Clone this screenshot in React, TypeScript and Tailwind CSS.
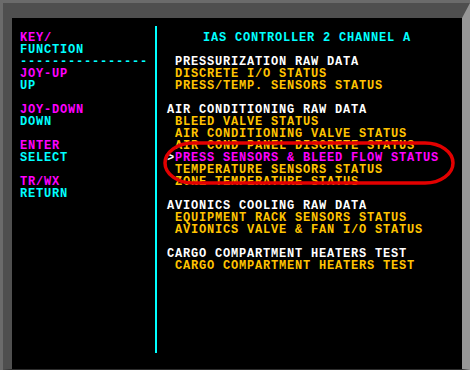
import React from "react";

type Line = { text: string; color: string };

const MAG = "text-[#ff00ff]";
const CYAN = "text-[#00ffff]";
const YEL = "text-[#ffc400]";
const WHITE = "text-white";

const leftLines: Line[] = [
  { text: "KEY/", color: MAG },
  { text: "FUNCTION", color: CYAN },
  { text: "----------------", color: CYAN },
  { text: "JOY-UP", color: MAG },
  { text: "UP", color: CYAN },
  { text: "", color: CYAN },
  { text: "JOY-DOWN", color: MAG },
  { text: "DOWN", color: CYAN },
  { text: "", color: CYAN },
  { text: "ENTER", color: MAG },
  { text: "SELECT", color: CYAN },
  { text: "", color: CYAN },
  { text: "TR/WX", color: MAG },
  { text: "RETURN", color: CYAN },
];

const rightLines: Line[] = [
  { text: "", color: WHITE },
  { text: " PRESSURIZATION RAW DATA", color: WHITE },
  { text: " DISCRETE I/O STATUS", color: YEL },
  { text: " PRESS/TEMP. SENSORS STATUS", color: YEL },
  { text: "", color: WHITE },
  { text: "AIR CONDITIONING RAW DATA", color: WHITE },
  { text: " BLEED VALVE STATUS", color: YEL },
  { text: " AIR CONDITIONING VALVE STATUS", color: YEL },
  { text: " AIR COND PANEL DISCRETE STATUS", color: YEL },
  { text: ">PRESS SENSORS & BLEED FLOW STATUS", color: MAG },
  { text: " TEMPERATURE SENSORS STATUS", color: YEL },
  { text: " ZONE TEMPERATURE STATUS", color: YEL },
  { text: "", color: WHITE },
  { text: "AVIONICS COOLING RAW DATA", color: WHITE },
  { text: " EQUIPMENT RACK SENSORS STATUS", color: YEL },
  { text: " AVIONICS VALVE & FAN I/O STATUS", color: YEL },
  { text: "", color: WHITE },
  { text: "CARGO COMPARTMENT HEATERS TEST", color: WHITE },
  { text: " CARGO COMPARTMENT HEATERS TEST", color: YEL },
];

function Row({ line }: { line: Line }) {
  if (line.text.startsWith(">")) {
    return (
      <div className="h-[12px] whitespace-pre">
        <span className="text-white">&gt;</span>
        <span className={line.color}>{line.text.slice(1)}</span>
      </div>
    );
  }
  return <div className={`h-[12px] whitespace-pre ${line.color}`}>{line.text || " "}</div>;
}

export default function App() {
  return (
    <div className="w-[470px] h-[370px] border-t-[3px] border-l-[3px] border-[#6b6b6b] bg-[#4f4f4f]">
      <div className="w-[467px] h-[367px] border-t-[15px] border-l-[9px] border-r-[8px] border-b-[1px] border-t-[#4f4f4f] border-l-[#4f4f4f] border-r-[#969696] border-b-[#2e2e2e]">
        <div
          className="relative w-[450px] h-[351px] bg-black flex text-[12px] tracking-[0.8px] leading-[12px] font-bold"
          style={{ fontFamily: '"Liberation Mono", "DejaVu Sans Mono", monospace' }}
        >
          <div className="w-[143px] pl-[8px] pt-[14px] flex flex-col">
            {leftLines.map((l, i) => (
              <Row key={i} line={l} />
            ))}
          </div>
          <div className="w-[2px] mt-[8px] h-[327px] bg-[#00ffff]" />
          <div className="flex-1 pl-[10px] pt-[14px] flex flex-col">
            <div className={`h-[12px] whitespace-pre pl-[36px] ${CYAN}`}>IAS CONTROLLER 2 CHANNEL A</div>
            {rightLines.map((l, i) => (
              <Row key={i} line={l} />
            ))}
          </div>
          <svg
            className="absolute left-[151px] top-[123px]"
            width="292"
            height="44"
            viewBox="0 0 292 44"
          >
            <rect x="2" y="2" width="288" height="40" rx="28" ry="20" fill="none" stroke="#e30000" strokeWidth="3.5" />
          </svg>
        </div>
      </div>
    </div>
  );
}
